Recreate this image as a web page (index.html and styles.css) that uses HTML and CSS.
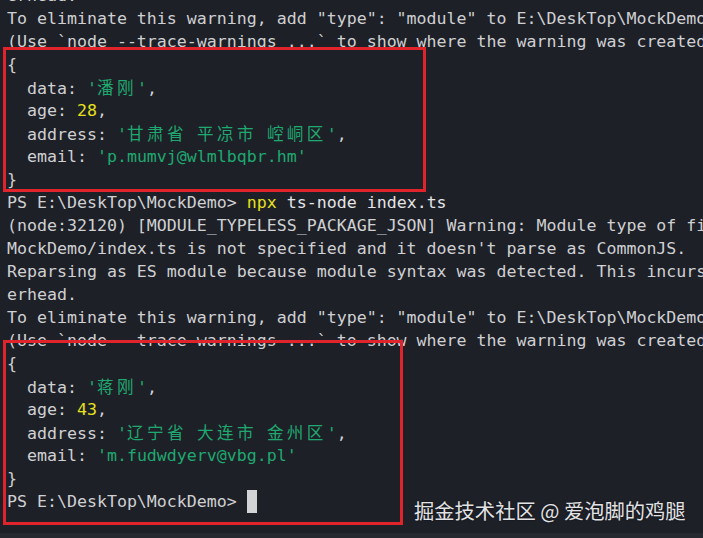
FILE: index.html
```html
<!DOCTYPE html>
<html lang="zh">
<head>
<meta charset="utf-8">
<title>Terminal</title>
<link rel="stylesheet" href="styles.css">
</head>
<body>
<main class="screen">
  <div class="term">
    <div class="line">erhead.</div>
    <div class="line">To eliminate this warning, add "type": "module" to E:\DeskTop\MockDemo\package.json.</div>
    <div class="line">(Use `node --trace-warnings ...` to show where the warning was created)</div>
    <div class="line">{</div>
    <div class="line">  data: <span class="str">'<span class="cjk">潘刚</span>'</span>,</div>
    <div class="line">  age: <span class="num">28</span>,</div>
    <div class="line">  address: <span class="str">'<span class="cjk">甘肃省</span> <span class="cjk">平凉市</span> <span class="cjk">崆峒区</span>'</span>,</div>
    <div class="line">  email: <span class="str">'p.mumvj@wlmlbqbr.hm'</span></div>
    <div class="line">}</div>
    <div class="line">PS E:\DeskTop\MockDemo&gt; <span class="num">npx</span> <span class="cmd">ts-node index.ts</span></div>
    <div class="line">(node:32120) [MODULE_TYPELESS_PACKAGE_JSON] Warning: Module type of file:///E:/DeskTop/</div>
    <div class="line">MockDemo/index.ts is not specified and it doesn't parse as CommonJS.</div>
    <div class="line">Reparsing as ES module because module syntax was detected. This incurs a performance ov</div>
    <div class="line">erhead.</div>
    <div class="line">To eliminate this warning, add "type": "module" to E:\DeskTop\MockDemo\package.json.</div>
    <div class="line">(Use `node --trace-warnings ...` to show where the warning was created)</div>
    <div class="line">{</div>
    <div class="line">  data: <span class="str">'<span class="cjk">蒋刚</span>'</span>,</div>
    <div class="line">  age: <span class="num">43</span>,</div>
    <div class="line">  address: <span class="str">'<span class="cjk">辽宁省</span> <span class="cjk">大连市</span> <span class="cjk">金州区</span>'</span>,</div>
    <div class="line">  email: <span class="str">'m.fudwdyerv@vbg.pl'</span></div>
    <div class="line">}</div>
    <div class="line">PS E:\DeskTop\MockDemo&gt; <span class="cursor"></span></div>
  </div>
  <div class="mark mark-one"></div>
  <div class="mark mark-two"></div>
  <div class="watermark">掘金技术社区 @ 爱泡脚的鸡腿</div>
  <div class="bottom-band"></div>
</main>
</body>
</html>
```
FILE: styles.css
```css
* { box-sizing: border-box; }
html, body {
  margin: 0;
  padding: 0;
  background: #1e2028;
}
.screen {
  position: relative;
  width: 703px;
  height: 538px;
  overflow: hidden;
  background: #1e2028;
}
.term {
  margin-top: -16px;
  padding-left: 7px;
  font-family: "DejaVu Sans Mono", "Liberation Mono", "Noto Sans CJK SC", monospace;
  font-size: 16.6px;
  line-height: 23px;
  color: #cfd0d2;
}
.line {
  white-space: pre;
  height: 23px;
}
.str { color: #1fa86f; }
.num { color: #e6e11c; }
.cmd { color: #e4e5e7; }
.cjk {
  font-family: "Noto Sans CJK SC", sans-serif;
  letter-spacing: 3.4px;
}
.cursor {
  display: inline-block;
  width: 10px;
  height: 23px;
  vertical-align: top;
  background: #d2d3d5;
}
.mark {
  position: absolute;
  border: 3px solid #e0242c;
}
.mark-one {
  left: 3px;
  top: 47px;
  width: 423px;
  height: 145px;
}
.mark-two {
  left: 3px;
  top: 340px;
  width: 400px;
  height: 185px;
}
.watermark {
  position: absolute;
  left: 414px;
  top: 496px;
  font-family: "Noto Sans CJK SC", sans-serif;
  font-size: 20.3px;
  line-height: 28px;
  color: #e2e3e5;
  text-shadow: 0 0 2px rgba(0,0,0,0.6);
}
.bottom-band {
  position: absolute;
  left: 0;
  right: 0;
  bottom: 0;
  height: 5px;
  background: #272930;
}
```
